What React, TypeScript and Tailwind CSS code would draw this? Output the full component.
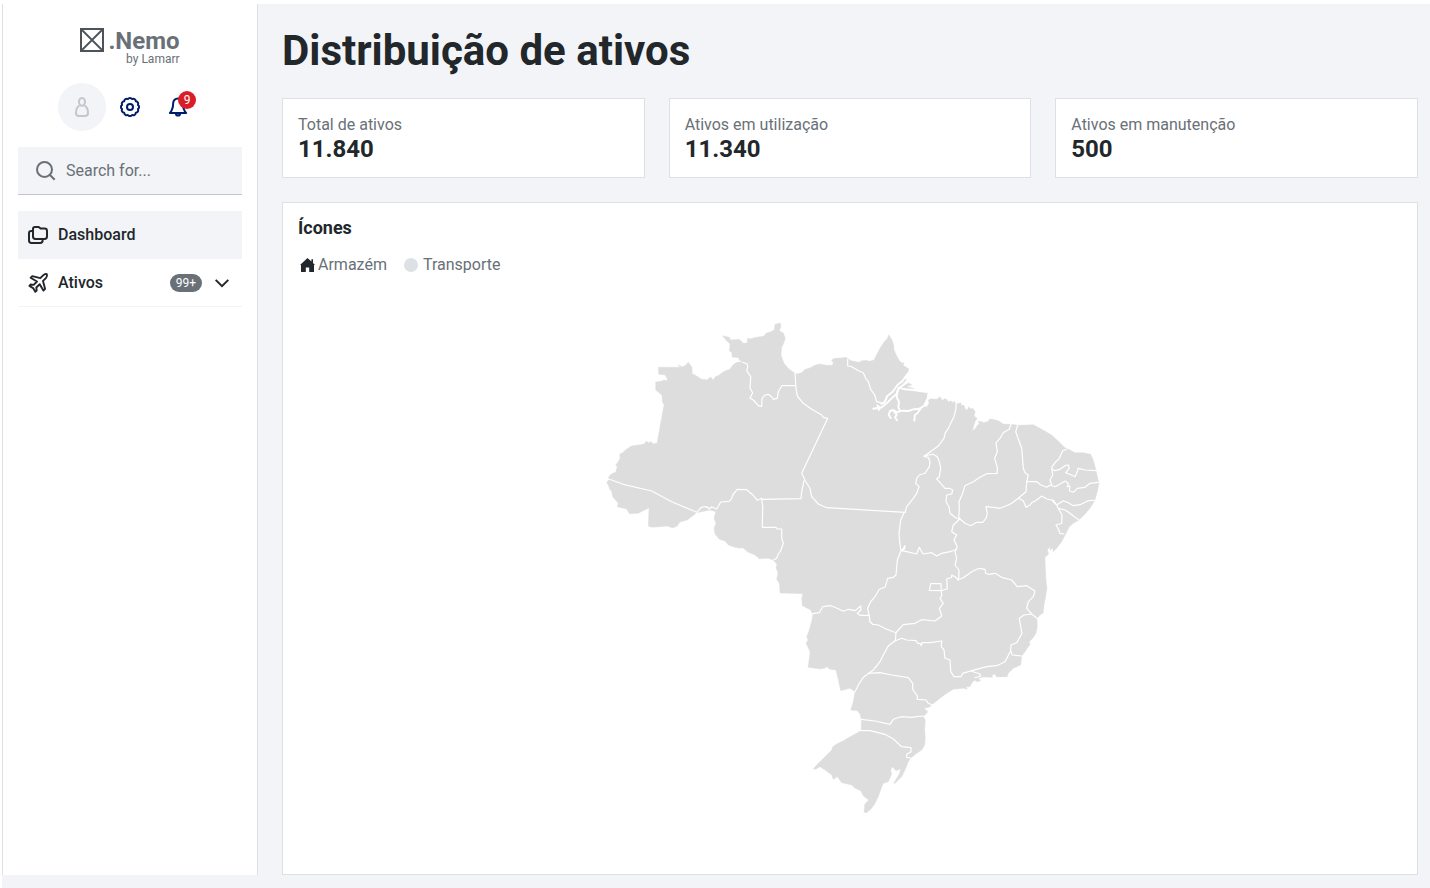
import React from "react";

/** Places a list of "x y" pairs, drawn at 3x on a tile, on the map's plane. */
const at = (ox: number, oy: number, list: string) => {
  const n = list.trim().split(/[\s,]+/).map(Number);
  const out: string[] = [];
  for (let i = 0; i < n.length; i += 2) {
    out.push(`${(ox + n[i] / 3).toFixed(1)},${(oy + n[i + 1] / 3).toFixed(1)}`);
  }
  return out.join(" ");
};

const NW = (l: string) => at(600, 310, l);
const N = (l: string) => at(780, 320, l);
const NE = (l: string) => at(940, 380, l);
const C = (l: string) => at(740, 480, l);
const SE = (l: string) => at(900, 530, l);
const S = (l: string) => at(800, 620, l);

const outline = [
  NW("20,518 27,508 25,503 30,496 38,490 48,486 49,478 52,472 47,465 55,455 60,445 59,432 68,428 75,421 86,413 95,408 108,406 122,404 133,402 138,394 147,398 153,394 158,401 171,400 192,284 187,275 186,256 167,240 167,216 187,213 190,210 201,212 202,207 196,195 176,193 175,172 240,172 235,164 245,170 254,168 265,157 276,172 277,192 285,195 305,208 322,209 328,203 334,202 339,211 346,200 358,195 368,187 380,181 390,178 396,168 405,160 415,156 428,157 418,150 416,143 396,141 396,128 388,122 390,102 380,92 367,77 388,82 392,90 418,88 430,100 441,99 443,85 455,86 462,83 480,80 492,78 498,70 510,66 523,60 525,43 541,39 543,48 538,62 550,69 556,85 551,100 545,112 543,135 552,160 566,176 583,188"),
  N("48,162 65,158 75,148 90,144 104,136 118,132 140,136 157,136 160,128 154,120 165,115 185,114 197,112 204,116 214,122 237,127 245,122 260,121 268,124 282,120 292,100 300,85 312,66 322,56 326,44 336,60 341,75 342,90 349,105 358,122 368,130 372,127 370,136 386,146 384,158 376,166 368,178 379,177 374,186 366,192 388,190 396,195 380,199 404,207 400,212 442,216 440,235 432,255 440,262 447,250 445,240 452,236 470,238"),
  NE("0,50 8,62 12,56 20,58 26,66 32,62 40,68 42,63 50,72 62,68 64,76 72,76 76,88 82,90 86,80 92,86 98,85 106,95 102,108 112,115 105,125 97,152 106,146 112,136 118,132 114,124 126,125 132,128 145,124 148,118 155,117 175,122 190,132 213,133 235,136 280,134 300,145 335,165 360,188 375,203 390,210 405,218 430,218 452,223 460,240 468,270 473,295 477,310 472,335 464,362 450,385 435,402 417,420 400,430 388,440 378,460 365,485 350,505 340,515"),
  SE("460,65 458,55 450,60 450,50 442,60 446,72 435,82 436,110 438,150 441,175 437,200 432,225 430,248 420,255 411,266 412,290 408,310 398,325 388,335 390,344 384,352 375,365 365,378 362,405 340,415 325,430 322,440 290,441 284,432 277,435 277,442 250,441 235,445 242,452 230,455 224,450 215,460 210,470 198,470 202,478 190,475"),
  S("460,208 440,220 420,235 398,252 388,262 372,265 384,275 375,285 370,290 376,300 374,330 376,355 374,375 365,390 350,400 332,415 325,425 315,450 305,470 285,490 281,490 298,462 302,446 288,452 277,440 272,450 275,462 265,485 250,490 240,515 235,530 225,550 215,565 200,578 192,577 194,553 206,540 190,528 182,512 165,505 155,495 125,488 112,470 100,478 95,465 75,450 60,440 47,448 40,446 55,430 75,410 95,390 98,380 110,372 130,362 150,350 175,337 184,330 184,300 180,282 172,272 152,270 160,245 165,215 150,205 122,212 115,180 108,150 90,148 80,140 74,145 60,147 24,142 30,100 28,90 18,70 24,60 20,50 26,35 36,0"),
  C("218,405 212,390 187,377 185,355 189,341 120,339 118,310 110,298 114,280 108,262 111,252 98,240 85,235 58,236 45,225 25,217 8,203 0,205"),
  NW("405,712 385,705 376,694 358,688 345,672 342,655 348,640 342,625 347,605 330,600 290,608 262,630 240,636 232,648 218,654 202,648 180,650 155,652 145,648 147,594 130,602 115,610 88,611 80,597 52,590 55,580 38,560 35,545 28,535 25,525"),
].join(" ");

const borders = [
  NW("20,505 70,523 155,543 215,575 290,607 305,591 320,590 328,597 335,590 350,597 362,576 388,574 395,565 400,552 412,538 440,539 460,556 472,571 485,565 487,568 603,566 605,545 612,512"),
  NW("428,157 442,162 443,172 440,182 452,200 450,235 458,248 450,265 460,270 475,287 485,289 486,265 495,255 505,253 515,260 520,268 532,265 535,245 545,227 586,227"),
  N("45,160 48,205 52,228 70,250 95,268 125,285 130,292 143,295 65,460 74,478"),
  N("74,480 90,505 95,530 115,552 140,563 375,577"),
  N("203,118 203,138 215,140 235,152 250,158 257,175 265,185 272,208 284,225 290,245 310,250"),
  N("375,577 380,560 400,535 410,520 417,500 407,490 410,475 418,465 435,460 448,440 450,425 445,412 432,409 455,392 475,378 492,355 495,340 505,325 512,310 522,290 528,265 528,248"),
  N("432,409 445,405 460,403 472,410 478,425 482,445 478,470 470,477 475,482 495,505 508,505 518,510 515,522 500,525 498,545 507,560 510,580 525,592 538,598"),
  NE("213,133 208,148 190,158 180,175 168,188 172,215 164,235 172,262 172,280 140,281 120,292 100,305 75,317 68,340 57,365 58,390 56,410 60,417"),
  NE("233,135 227,155 238,185 245,205 250,265 255,278 265,285 260,305"),
  NE("60,417 75,430 92,437 110,427 128,427 138,415 142,400 138,380 160,382 180,385 205,375 215,370 235,355 258,335 260,305"),
  NE("260,305 290,305 303,315 320,322 330,315 345,320 360,312 375,303 385,310 382,320 390,318 388,332 400,337 412,325 435,322 450,310 475,307"),
  NE("380,208 368,212 358,235 345,248 335,262 338,285 330,300 335,315"),
  NE("336,268 345,272 360,268 375,257 385,255 388,265 377,278 395,285 405,290 410,280 415,265 435,270 470,272"),
  NE("235,355 250,362 258,382 270,375 275,368 290,360 305,348 320,357 335,360 350,375 370,362 385,368 400,377 420,374 445,362 464,361"),
  NE("340,360 350,375 355,385 375,390 390,400 405,412 417,419"),
  NE("355,385 366,405 365,430 348,435 355,447 360,460 372,462"),
  C("660,116 640,135 635,155 650,165 642,180 652,200 645,215 650,235 645,255 657,270 656,298"),
  C("483,212 490,205 495,197 494,206 485,212 500,215 530,222 538,202 545,215 550,222 575,218 590,228 605,220 630,215 650,208"),
  C("492,98 482,120 477,160 480,195 483,212 472,240 468,285 460,292 443,295 435,322 418,328 405,350 392,365 383,385 388,410 390,425 398,433 415,435 440,448 468,458"),
  C("65,57 68,80 67,142 108,142 112,147 125,147 125,175 130,190 122,212 115,222 110,235 100,240"),
  C("218,401 238,398 248,380 272,377 290,384 310,394 325,388 345,392 362,378 363,390 352,400 360,406 388,406"),
  C("604,332 603,311 572,311 568,331 604,332 622,326 620,297 635,292 635,285 645,290 656,300"),
  C("604,332 605,348 600,355 610,370 598,385 605,408 585,423 545,419 525,430 490,434 475,450 468,458 466,482"),
  C("466,482 485,475 500,480 528,482 533,490 540,490 544,497 546,488 570,488 605,483"),
  SE("172,150 190,143 215,125 237,115 255,118 257,130 265,133 285,130 305,142 335,150 352,170 380,167 405,183 400,200 385,215 380,235 395,252 411,265"),
  SE("395,252 372,255 358,265 362,290 366,310 350,338 333,345 332,362 337,375 365,378"),
  SE("332,362 315,395 290,407 260,410 215,422 188,430 183,440 162,440 152,425 150,390 135,385 132,360 124,350 125,333"),
  SE("215,424 240,432 242,438 225,443"),
  S("285,62 265,78 250,105 240,125 220,150 190,172 178,190 165,215"),
  S("205,160 240,158 275,165 325,173 338,190 338,208 352,228 352,238 378,240 385,250 398,255"),
  S("184,298 225,303 270,313 280,298 303,290 335,292 350,290 372,288"),
  S("175,332 210,332 255,343 280,357 305,380 333,383 333,395 320,403 320,412 332,414"),
];

const rivers = [
  N("384,160 368,182 352,196 338,215 322,228 314,246 304,252"),
  N("378,190 356,205 352,220 338,232 325,245 305,262 280,266"),
  N("292,256 300,264 296,270"),
  N("352,212 350,232 357,245 355,262 360,272"),
  N("332,294 326,284 330,273 340,270 350,277 366,272 385,273 400,268 415,267 432,258 442,238"),
  N("342,274 350,284 345,292 351,301"),
  N("425,262 412,280 405,284 403,302"),
  N("355,203 375,208 400,210 440,216"),
];

/** Twelve shallow lobes round the centre of a 24-unit box. */
const lobes =
  Array.from({ length: 12 }, (_, k) => {
    const a = ((k * 30 + 15) * Math.PI) / 180;
    const p = `${(12 + 8.2 * Math.cos(a)).toFixed(2)} ${(12 + 8.2 * Math.sin(a)).toFixed(2)}`;
    return k === 0 ? `M${p}` : `A2.5 2.5 0 0 1 ${p}`;
  }).join("") + "A2.5 2.5 0 0 1 19.92 14.12Z";

function BrazilMap() {
  return (
    <svg viewBox="600 310 510 510" className="h-[510px] w-[510px]" aria-hidden="true">
      <polygon points={outline} fill="#ddd" stroke="#ddd" strokeWidth=".4" />
      <g fill="none" stroke="#fff" strokeLinejoin="round" strokeLinecap="round">
        {borders.map((p, i) => (
          <polyline key={i} points={p} strokeWidth="1.2" />
        ))}
        {rivers.map((p, i) => (
          <polyline key={i} points={p} strokeWidth="1.9" />
        ))}
      </g>
    </svg>
  );
}

type IconProps = { className?: string; children: React.ReactNode };

function Icon({ className = "", children }: IconProps) {
  return (
    <svg
      viewBox="0 0 24 24"
      className={`size-6 shrink-0 ${className}`}
      fill="none"
      stroke="currentColor"
      strokeWidth="2"
      strokeLinejoin="round"
      aria-hidden="true"
    >
      {children}
    </svg>
  );
}

function Stat({ label, value }: { label: string; value: string }) {
  return (
    <div className="h-20 border border-[#dde1e6] bg-white px-[15px] pt-[14px]">
      <div className="text-base leading-6 text-[#697077]">{label}</div>
      <div className="text-2xl leading-6 font-bold">{value}</div>
    </div>
  );
}

export default function App() {
  return (
    <div className="h-[888px] overflow-hidden bg-white pt-1 pl-0.5 font-['Roboto',sans-serif] text-[#21272a]">
      <div className="flex h-full bg-[#f2f4f8]">
        <aside className="h-[871px] w-64 shrink-0 border-x border-[#dde1e6] bg-white px-[15px]">
          <div className="flex h-[79px] justify-center pt-6">
            <svg viewBox="0 0 24 24" className="size-6" fill="none" stroke="#4d5358" aria-hidden="true">
              <rect x="1" y="1" width="22" height="22" strokeWidth="2" />
              <path d="M2 2l20 20M22 2 2 22" strokeWidth="1.8" />
            </svg>
            <div className="ml-1 text-right text-[#697077]">
              <div className="text-2xl leading-[26px] font-bold">.Nemo</div>
              <div className="text-xs leading-[11px]">by Lamarr</div>
            </div>
          </div>

          <div className="flex h-12 items-center pl-10">
            <div className="flex size-12 items-center justify-center rounded-full bg-[#f2f4f8] text-[#c1c7cd]">
              <Icon>
                <ellipse cx="12" cy="6.8" rx="3" ry="3.9" />
                <path d="M9.3 10.600C7 12 6 15.200 6 18c0 2.200.8 3 3 3h6c2.200 0 3-.8 3-3 0-2.800-1-6-3.300-7.400" />
              </Icon>
            </div>
            <button className="ml-3 text-[#001d6c]" aria-label="Configurações">
              <Icon>
                <circle cx="12" cy="12" r="3" />
                <path d={lobes} />
              </Icon>
            </button>
            <button className="relative ml-6 text-[#001d6c]" aria-label="Notificações">
              <Icon>
                <path d="M12 3.500c-3.200 0-4.900 2.300-4.900 5.200C7.100 12.500 6 15.500 3.900 18h16.200c-2.100-2.500-3.200-5.500-3.200-9.300 0-2.900-1.700-5.200-4.900-5.200z" />
                <path d="M9.800 18.500c.2 1.300 1 2 2.200 2s2-.7 2.200-2" />
              </Icon>
              <span className="absolute -top-1 left-3 flex size-[18px] items-center justify-center rounded-full bg-[#da1e28] text-xs leading-none text-white">
                9
              </span>
            </button>
          </div>

          <div className="mt-4 flex h-12 items-center border-b border-[#c1c7cd] bg-[#f2f4f8] pl-4 text-[#697077]">
            <Icon>
              <circle cx="10.500" cy="10.500" r="7.500" />
              <path d="M16 16l4.700 4.700" />
            </Icon>
            <span className="ml-2 text-base">Search for...</span>
          </div>

          <nav className="mt-4 text-base font-medium">
            <a className="flex h-12 items-center bg-[#f2f4f8] pl-2">
              <Icon>
                <path d="M7 6v7.600C7 15.300 7.700 16 9.400 16h9.200c1.700 0 2.400-.7 2.400-2.400V8c0-1.700-.7-2.400-2.400-2.400h-4L12.700 4H9C7.600 4 7 4.600 7 6z" />
                <path d="M7 8H5.300C3.700 8 3 8.700 3 10.300v7.300C3 19.300 3.700 20 5.400 20h8.800c1.700 0 2.400-.7 2.400-2.400V16" />
              </Icon>
              <span className="ml-2">Dashboard</span>
            </a>
            <a className="flex h-12 items-center border-b border-[#f2f4f8] pr-2 pl-2">
              <Icon>
                <path
                  d="M20.800 3.200c-1.300-.5-2.700.1-3.700 1.100l-2.800 2.900-8-2.100-1.700 1.700 6.400 3.700-3.300 3.400-3-.4-1.300 1.400 3.700 2.200 2.200 3.700 1.400-1.300-.4-3 3.400-3.300 3.700 6.400 1.700-1.700-2.100-8 2.900-2.800c1-1 1.500-2.600.9-3.900z"
                  strokeWidth="1.900"
                />
              </Icon>
              <span className="ml-2">Ativos</span>
              <span className="ml-auto flex h-[18px] w-8 items-center justify-center rounded-full bg-[#697077] text-xs font-normal text-white">
                99+
              </span>
              <Icon className="ml-2">
                <path d="M5.700 8.900l6.300 6.200 6.300-6.200" strokeLinejoin="miter" />
              </Icon>
            </a>
          </nav>
        </aside>

        <main className="min-w-0 flex-1 pr-3 pl-6">
          <h1 className="h-[94px] pt-[22px] text-[42px] leading-[50px] font-bold">Distribuição de ativos</h1>
          <div className="grid grid-cols-3 gap-6">
            <Stat label="Total de ativos" value="11.840" />
            <Stat label="Ativos em utilização" value="11.340" />
            <Stat label="Ativos em manutenção" value="500" />
          </div>
          <section className="mt-6 h-[673px] border border-[#dde1e6] bg-white px-[15px] pt-[13px]">
            <h2 className="text-lg leading-6 font-bold">Ícones</h2>
            <div className="mt-[13px] flex h-6 items-center text-base text-[#697077]">
              <svg viewBox="0 0 16 16" className="ml-0.5 size-4 text-[#21272a]" fill="currentColor" aria-hidden="true">
                <path d="M7.500 1 0 8h1v7h4.800v-4.500h3.400V15H14V8h1l-2-1.900V2.300h-1.600v2.300z" />
              </svg>
              <span className="ml-0.5">Armazém</span>
              <span className="ml-[17px] size-3.5 rounded-full bg-[#dde1e6]" />
              <span className="ml-[5px]">Transporte</span>
            </div>
            <div className="mt-[33px] ml-[302px]">
              <BrazilMap />
            </div>
          </section>
        </main>
      </div>
    </div>
  );
}
